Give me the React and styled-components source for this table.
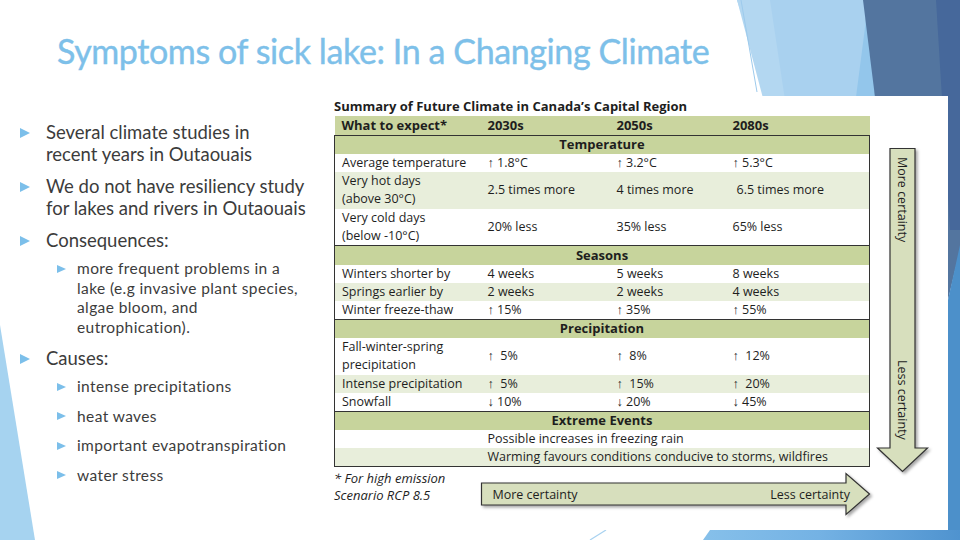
import React from 'react';
import styled, { createGlobalStyle } from 'styled-components';

// page reset
const GlobalStyle = createGlobalStyle`
  html, body {
    margin: 0;
    padding: 0;
    background: #ffffff;
  }
  body {
    font-family: Lato, "Liberation Sans", sans-serif;
  }
`;

// Slide is the fixed 960x540 canvas
const Slide = styled.div`
  position: relative;
  width: 960px;
  height: 540px;
  overflow: hidden;
  background: #ffffff;
`;

// Backdrop holds the blue facet drawing of the theme
const Backdrop = styled.svg`
  position: absolute;
  top: 0;
  left: 0;
  z-index: 0;
`;

const Content = styled.div`
  position: relative;
  z-index: 1;
  display: flex;
  flex-direction: column;
`;

const Title = styled.h1`
  margin: 0;
  padding: 31px 0 0 57px;
  font-family: Lato, "Liberation Sans", sans-serif;
  font-weight: 400;
  font-size: 34px;
  line-height: 40px;
  letter-spacing: -0.4px;
  color: #7dc0e9;
  -webkit-text-stroke: 0.4px #7dc0e9;
`;

const Body = styled.div`
  display: grid;
  grid-template-columns: 326px 622px;
`;

// left column with the bullet points
const Bullets = styled.ul`
  list-style: none;
  margin: 0;
  padding: 50px 0 0 20px;
`;

const Item = styled.li`
  position: relative;
  margin-top: 10px;
  padding-left: 26px;
  font-size: 18.5px;
  line-height: 22px;
  color: #3c3c3c;
  white-space: nowrap;

  &:first-child {
    margin-top: 0;
  }

  &::before {
    content: '';
    position: absolute;
    left: 0;
    top: 7px;
    border-left: 10px solid #7cbfea;
    border-top: 5px solid transparent;
    border-bottom: 5px solid transparent;
  }
`;

const SubList = styled.ul`
  list-style: none;
  margin: 8px 0 0 11px;
  padding: 0;
`;

const SubItem = styled.li`
  position: relative;
  margin-top: 10px;
  padding-left: 20px;
  font-size: 15.5px;
  line-height: 19.5px;
  letter-spacing: 0.4px;
  color: #3c3c3c;

  &:first-child {
    margin-top: 0;
  }

  &::before {
    content: '';
    position: absolute;
    left: 0;
    top: 5.5px;
    border-left: 9px solid #7cbfea;
    border-top: 4.5px solid transparent;
    border-bottom: 4.5px solid transparent;
  }
`;

// Figure is the white picture of the climate table
const Figure = styled.div`
  margin-top: 25px;
  height: 434px;
  background: #ffffff;
  display: flex;
  padding-left: 8px;
  font-family: "Open Sans", "Noto Sans", sans-serif;
  color: #1e1e1e;
`;

const FigureMain = styled.div`
  width: 535px;
  display: flex;
  flex-direction: column;
`;

const Caption = styled.div`
  height: 20px;
  font-size: 13px;
  font-weight: 700;
  line-height: 20px;
  white-space: nowrap;
`;

const Table = styled.table`
  width: 535px;
  border-collapse: collapse;
  table-layout: fixed;
  font-size: 12.5px;

  tbody {
    border: 1px solid #333333;
  }
`;

const HeadCell = styled.th`
  height: 18.5px;
  padding: 0 0 0 7px;
  text-align: left;
  font-weight: 700;
  font-size: 13px;
  line-height: 18px;
  background: #cad59f;
`;

const toneColors = {
  white: '#ffffff',
  light: '#e8eedb',
  section: '#c7d49c',
};

const rowHeight = p => (p.$tall ? 36.5 : p.$tone === 'section' ? 18.5 : 17.7);

const Row = styled.tr`
  background: ${p => toneColors[p.$tone || 'white']};

  td {
    height: ${rowHeight}px;
    ${p => p.$tone === 'section' && 'border-top: 1.5px solid #333333;'}
  }
`;

const Cell = styled.td`
  padding: 0 0 0 ${p => p.$indent || 7}px;
  line-height: 18px;
  vertical-align: middle;
  white-space: pre;
`;

const SectionCell = styled.td`
  padding: 0;
  text-align: center;
  font-weight: 700;
  font-size: 13px;
  line-height: 17px;
`;

const Footer = styled.div`
  display: flex;
`;

const Footnote = styled.div`
  width: 148px;
  padding-top: 3px;
  font-size: 13px;
  font-style: italic;
  line-height: 17px;
`;

// ArrowBox is a label group over the drawn arrow shape
const ArrowBox = styled.div`
  position: relative;
  box-sizing: border-box;
  display: flex;
  align-items: center;
  justify-content: space-between;
  font-size: 12.5px;
  color: #1e1e1e;
  ${p =>
    p.$vertical
      ? `
    width: 51px;
    height: 324px;
    writing-mode: vertical-rl;
    padding: 9px 0 32px 0;
  `
      : `
    width: 389px;
    height: 42px;
    margin-top: 6px;
    padding: 0 19px 0 11px;
  `}
`;

const ArrowShape = styled.svg`
  position: absolute;
  top: 0;
  left: 0;
  overflow: visible;
  filter: drop-shadow(2px 2px 1.5px rgba(0, 0, 0, 0.35));
`;

const ArrowLabel = styled.span`
  position: relative;
  white-space: nowrap;
`;

const Side = styled.div`
  margin-left: 8px;
  padding-top: 52px;
`;

const Arrow = ({ vertical, from, to }) => (
  <ArrowBox $vertical={vertical}>
    {vertical ? (
      <ArrowShape width="51" height="324">
        <polygon
          points="13,0.5 38,0.5 38,300 50.5,300 25.5,323.5 0.5,300 13,300"
          fill="#d7dfbd"
          stroke="#333"
          strokeWidth="1.2"
        />
      </ArrowShape>
    ) : (
      <ArrowShape width="389" height="42">
        <polygon
          points="0.5,10 365,10 365,0.5 388.5,21 365,41.5 365,32 0.5,32"
          fill="#d7dfbd"
          stroke="#333"
          strokeWidth="1.2"
        />
      </ArrowShape>
    )}
    <ArrowLabel>{from}</ArrowLabel>
    <ArrowLabel>{to}</ArrowLabel>
  </ArrowBox>
);

const sections = [
  {
    name: 'Temperature',
    rows: [
      { label: 'Average temperature', values: ['↑ 1.8°C', '↑ 3.2°C', '↑ 5.3°C'] },
      { label: ['Very hot days', '(above 30°C)'], values: ['2.5 times more', '4 times more', '6.5 times more'], tone: 'light', indent: 11 },
      { label: ['Very cold days', '(below -10°C)'], values: ['20% less', '35% less', '65% less'] },
    ],
  },
  {
    name: 'Seasons',
    rows: [
      { label: 'Winters shorter by', values: ['4 weeks', '5 weeks', '8 weeks'] },
      { label: 'Springs earlier by', values: ['2 weeks', '2 weeks', '4 weeks'], tone: 'light' },
      { label: 'Winter freeze-thaw', values: ['↑ 15%', '↑ 35%', '↑ 55%'] },
    ],
  },
  {
    name: 'Precipitation',
    rows: [
      { label: ['Fall-winter-spring', 'precipitation'], values: ['↑  5%', '↑  8%', '↑  12%'] },
      { label: 'Intense precipitation', values: ['↑  5%', '↑  15%', '↑  20%'], tone: 'light' },
      { label: 'Snowfall', values: ['↓ 10%', '↓ 20%', '↓ 45%'] },
    ],
  },
];

const extremes = [
  { text: 'Possible increases in freezing rain' },
  { text: 'Warming favours conditions conducive to storms, wildfires', tone: 'light' },
];

const renderLabel = label =>
  Array.isArray(label) ? (
    <>
      {label[0]}
      <br />
      {label[1]}
    </>
  ) : (
    label
  );

const App = () => (
  <>
    <GlobalStyle />
    <Slide>
      <Backdrop width="960" height="540" viewBox="0 0 960 540">
        <defs>
          <linearGradient id="strip" x1="0" y1="0" x2="1" y2="0">
            <stop offset="0" stopColor="#86c0ea" />
            <stop offset="0.45" stopColor="#74b2e4" />
            <stop offset="1" stopColor="#4f93cf" />
          </linearGradient>
        </defs>
        <polygon points="737,0 866,0 892,200 802,200" fill="#a9d1ef" />
        <polygon points="737,0 770,0 800,200 790,200" fill="#b3d7f1" />
        <polygon points="866,20 873,70 878,97 856,97" fill="#93c6eb" />
        <line x1="741" y1="0" x2="757" y2="92" stroke="#9dcaec" strokeWidth="1" />
        <polygon points="863,0 960,0 960,250 948,300 900,300" fill="#53759f" />
        <polygon points="936,0 960,0 960,230 950,230" fill="#46689b" />
        <polygon points="948,300 960,245 960,540 948,540" fill="#4c90ca" />
        <polygon points="710,530 960,530 960,540 703,540" fill="url(#strip)" />
        <line x1="590" y1="540" x2="606" y2="530" stroke="#a8d2f0" strokeWidth="1.2" />
        <polygon points="0,325 35,540 0,540" fill="#a6d3f0" />
      </Backdrop>

      <Content>
        <Title>Symptoms of sick lake: In a Changing Climate</Title>
        <Body>
          <Bullets>
            <Item>
              Several climate studies in
              <br />
              recent years in Outaouais
            </Item>
            <Item>
              We do not have resiliency study
              <br />
              for lakes and rivers in Outaouais
            </Item>
            <Item>
              Consequences:
              <SubList>
                <SubItem>
                  more frequent problems in a
                  <br />
                  lake (e.g invasive plant species,
                  <br />
                  algae bloom, and
                  <br />
                  eutrophication).
                </SubItem>
              </SubList>
            </Item>
            <Item>
              Causes:
              <SubList>
                <SubItem>intense precipitations</SubItem>
                <SubItem>heat waves</SubItem>
                <SubItem>important evapotranspiration</SubItem>
                <SubItem>water stress</SubItem>
              </SubList>
            </Item>
          </Bullets>

          <Figure>
            <FigureMain>
              <Caption>Summary of Future Climate in Canada’s Capital Region</Caption>
              <Table>
                <colgroup>
                  <col style={{ width: 146 }} />
                  <col style={{ width: 129 }} />
                  <col style={{ width: 116 }} />
                  <col style={{ width: 144 }} />
                </colgroup>
                <thead>
                  <tr>
                    <HeadCell>What to expect*</HeadCell>
                    <HeadCell>2030s</HeadCell>
                    <HeadCell>2050s</HeadCell>
                    <HeadCell>2080s</HeadCell>
                  </tr>
                </thead>
                {sections.map(section => (
                  <tbody key={section.name}>
                    <Row $tone="section">
                      <SectionCell colSpan={4}>{section.name}</SectionCell>
                    </Row>
                    {section.rows.map(row => (
                      <Row
                        key={String(row.label)}
                        $tone={row.tone}
                        $tall={Array.isArray(row.label)}
                      >
                        <Cell>{renderLabel(row.label)}</Cell>
                        <Cell>{row.values[0]}</Cell>
                        <Cell>{row.values[1]}</Cell>
                        <Cell $indent={row.indent}>{row.values[2]}</Cell>
                      </Row>
                    ))}
                  </tbody>
                ))}
                <tbody>
                  <Row $tone="section">
                    <SectionCell colSpan={4}>Extreme Events</SectionCell>
                  </Row>
                  {extremes.map(row => (
                    <Row key={row.text} $tone={row.tone}>
                      <Cell />
                      <Cell colSpan={3}>{row.text}</Cell>
                    </Row>
                  ))}
                </tbody>
              </Table>
              <Footer>
                <Footnote>
                  * For high emission
                  <br />
                  Scenario RCP 8.5
                </Footnote>
                <Arrow from="More certainty" to="Less certainty" />
              </Footer>
            </FigureMain>
            <Side>
              <Arrow vertical from="More certainty" to="Less certainty" />
            </Side>
          </Figure>
        </Body>
      </Content>
    </Slide>
  </>
);

export default App;
